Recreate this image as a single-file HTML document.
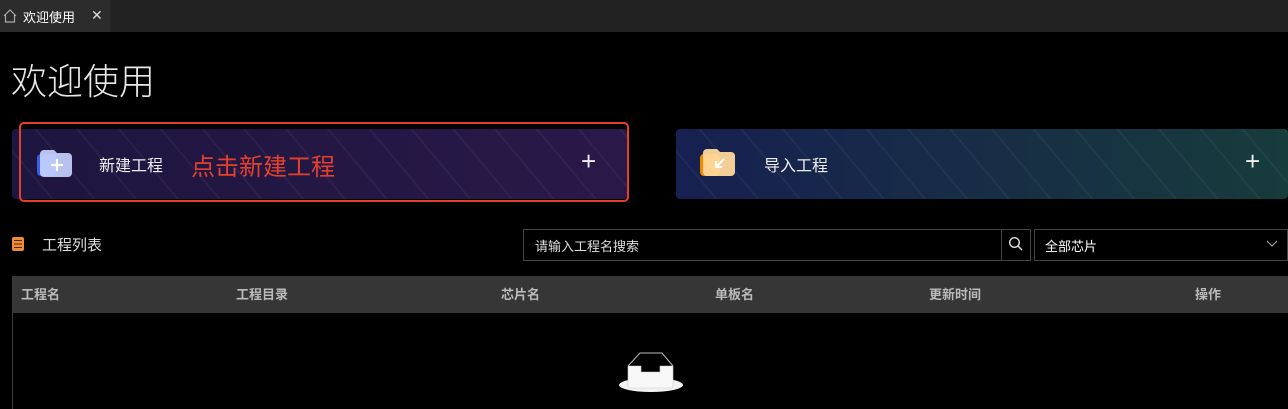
<!DOCTYPE html>
<html><head><meta charset="utf-8"><style>
*{margin:0;padding:0;box-sizing:border-box}
body{width:1288px;height:409px;background:#000;font-family:"Liberation Sans","Noto Sans CJK SC",sans-serif;color:#fff;position:relative;overflow:hidden}
.tabbar{position:absolute;left:0;top:0;width:1288px;height:32px;background:#222}
.tab{position:absolute;left:0;top:0;width:110px;height:32px;background:#2c2c2c;font-size:13px}
.abs{position:absolute}
.card{position:absolute;top:129px;height:70px;border-radius:4px;overflow:hidden}
.stripes{position:absolute;inset:0;background:repeating-linear-gradient(50deg,transparent 0 30px,rgba(255,255,255,0.045) 30px 32px)}
.th{position:absolute;top:276px;height:37px;font-size:13px;font-weight:bold;color:#bbb;line-height:37px}
</style></head><body>
<div class="tabbar"></div>
<div class="tab">
<svg class="abs" style="left:2px;top:8px" width="16" height="16" viewBox="0 0 16 16"><path d="M2 8 L8 2 L14 8 M3.5 7 V14 H12.5 V7" fill="none" stroke="#aaa" stroke-width="1.2"/></svg>
<span class="abs" style="left:23px;top:7px;color:#fff">欢迎使用</span>
<span class="abs" style="left:91px;top:7px;font-size:14px;color:#ddd">✕</span>
</div>
<div class="abs" style="left:11px;top:58px;font-size:36px;color:#e8e8e8;line-height:48px;font-weight:300">欢迎使用</div>

<div class="card" style="left:12px;width:616px;background:linear-gradient(90deg,#1d1640,#2a1848)"><div class="stripes"></div></div>
<div class="abs" style="left:19px;top:122px;width:610px;height:80px;border:2px solid #e5402c;border-radius:5px"></div>
<svg class="abs" style="left:37px;top:147px" width="38" height="34" viewBox="0 0 38 34"><rect x="0" y="7" width="20" height="22" rx="4" fill="#3a5fe0"/><path d="M7 3 h10 l3 3 h11 a4 4 0 0 1 4 4 v16 a4 4 0 0 1 -4 4 h-24 a4 4 0 0 1 -4 -4 v-19 a4 4 0 0 1 4 -4z" fill="#c9d4ff" opacity="0.9"/><path d="M20 12 v12 M14 18 h12" stroke="#fff" stroke-width="2.2"/></svg>
<div class="abs" style="left:99px;top:152px;font-size:16px;color:#eee">新建工程</div>
<div class="abs" style="left:191px;top:147px;font-size:24px;color:#e5402c">点击新建工程</div>
<div class="abs" style="left:581px;top:146px;font-size:26px;color:#eee;font-weight:300">+</div>

<div class="card" style="left:676px;width:612px;background:linear-gradient(90deg,#172050,#173044 60%,#173c3c)"><div class="stripes"></div></div>
<svg class="abs" style="left:700px;top:147px" width="38" height="34" viewBox="0 0 38 34"><rect x="0" y="7" width="20" height="22" rx="4" fill="#f08a00"/><path d="M7 2 h10 l3 3 h11 a4 4 0 0 1 4 4 v16 a4 4 0 0 1 -4 4 h-24 a4 4 0 0 1 -4 -4 v-19 a4 4 0 0 1 4 -4z" fill="#ffd79a" opacity="0.95"/><path d="M24 12 l-8 8 M16 14 v6 h6" fill="none" stroke="#fff" stroke-width="2"/></svg>
<div class="abs" style="left:764px;top:152px;font-size:16px;color:#eee">导入工程</div>
<div class="abs" style="left:1245px;top:146px;font-size:26px;color:#eee;font-weight:300">+</div>

<svg class="abs" style="left:12px;top:237px" width="12" height="14" viewBox="0 0 12 14"><rect width="12" height="14" rx="2" fill="#f08a3c"/><path d="M2 3.5h8M2 7h8M2 10.5h8" stroke="#5a2a00" stroke-width="1"/></svg>
<div class="abs" style="left:42px;top:234px;font-size:15px;color:#ddd">工程列表</div>
<div class="abs" style="left:523px;top:229px;width:508px;height:32px;border:1px solid #444"></div>
<div class="abs" style="left:1001px;top:229px;width:1px;height:32px;background:#444"></div>
<div class="abs" style="left:535px;top:236px;font-size:13px;color:#ddd">请输入工程名搜索</div>
<svg class="abs" style="left:1008px;top:236px" width="16" height="16" viewBox="0 0 16 16"><circle cx="6.5" cy="6.5" r="4.8" fill="none" stroke="#ddd" stroke-width="1.4"/><path d="M10 10 L14 14" stroke="#ddd" stroke-width="1.5"/></svg>
<div class="abs" style="left:1034px;top:229px;width:254px;height:32px;border:1px solid #444"></div>
<div class="abs" style="left:1045px;top:236px;font-size:13px;color:#fff">全部芯片</div>
<svg class="abs" style="left:1266px;top:239px" width="12" height="10" viewBox="0 0 12 10"><path d="M1 2 L6 7 L11 2" fill="none" stroke="#aaa" stroke-width="1"/></svg>

<div class="abs" style="left:12px;top:276px;width:1276px;height:37px;background:#363636"></div>
<div class="abs" style="left:12px;top:276px;width:1px;height:133px;background:#3a3a3a"></div>
<div class="th" style="left:21px">工程名</div>
<div class="th" style="left:236px">工程目录</div>
<div class="th" style="left:501px">芯片名</div>
<div class="th" style="left:715px">单板名</div>
<div class="th" style="left:929px">更新时间</div>
<div class="th" style="left:1195px">操作</div>
<svg class="abs" style="left:618px;top:352px" width="66" height="42" viewBox="0 0 66 42"><ellipse cx="33" cy="33" rx="32" ry="7" fill="#f2f2f2"/><path d="M10 14 H23 V20 H42 V14 H55 V34 a2 2 0 0 1 -2 2 H12 a2 2 0 0 1 -2 -2 Z" fill="#f8f8f8" stroke="#ccc" stroke-width="0.6"/><path d="M10 14 L22 1 H44 L55 14" fill="none" stroke="#bbb" stroke-width="1"/></svg>
</body></html>
